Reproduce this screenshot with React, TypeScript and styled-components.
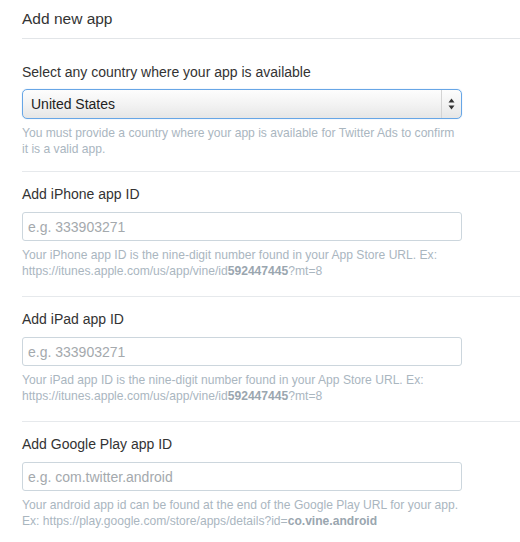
import styled, { createGlobalStyle } from 'styled-components';

const GlobalStyle = createGlobalStyle`
  body {
    margin: 0;
    background: #fff;
    font-family: "Helvetica Neue", "Liberation Sans", Arial, sans-serif;
    color: #333;
  }
`;

interface FieldSectionProps {
  label: string;
  placeholder: string;
  help: React.ReactNode;
}

const FieldSection = (props: FieldSectionProps) => {
  const { label, placeholder, help } = props;
  return (
    <Section>
      <Label>{label}</Label>
      <TextInput type="text" placeholder={placeholder} />
      <HelpText>{help}</HelpText>
    </Section>
  );
};

const App = () => {
  return (
    <>
      <GlobalStyle />
      <Page>
        <Header>
          <Title>Add new app</Title>
        </Header>
        <Section $first>
          <Label>Select any country where your app is available</Label>
          <SelectBox>
            <SelectValue>United States</SelectValue>
            <SelectHandle>
              <svg width="7" height="12" viewBox="0 0 7 12">
                <path d="M3.5 0.5 L6.5 4.5 L0.5 4.5 Z" fill="#333" />
                <path d="M3.5 11.5 L6.5 7.5 L0.5 7.5 Z" fill="#333" />
              </svg>
            </SelectHandle>
          </SelectBox>
          <HelpText>
            You must provide a country where your app is available for Twitter Ads to confirm
            <br />
            it is a valid app.
          </HelpText>
        </Section>
        <FieldSection
          label="Add iPhone app ID"
          placeholder="e.g. 333903271"
          help={
            <>
              Your iPhone app ID is the nine-digit number found in your App Store URL. Ex:
              <br />
              https://itunes.apple.com/us/app/vine/id<Strong>592447445</Strong>?mt=8
            </>
          }
        />
        <FieldSection
          label="Add iPad app ID"
          placeholder="e.g. 333903271"
          help={
            <>
              Your iPad app ID is the nine-digit number found in your App Store URL. Ex:
              <br />
              https://itunes.apple.com/us/app/vine/id<Strong>592447445</Strong>?mt=8
            </>
          }
        />
        <FieldSection
          label="Add Google Play app ID"
          placeholder="e.g. com.twitter.android"
          help={
            <>
              Your android app id can be found at the end of the Google Play URL for your app.
              <br />
              Ex: https://play.google.com/store/apps/details?id=<Strong>co.vine.android</Strong>
            </>
          }
        />
      </Page>
    </>
  );
};

export default App;

const Page = styled.div`
  display: flex;
  flex-direction: column;
  padding-left: 22px;
  width: 498px;
`;

const Header = styled.div`
  padding: 9px 0 9px;
  border-bottom: 1px solid #e2e5e8;
`;

const Title = styled.h1`
  margin: 0;
  font-size: 15.5px;
  line-height: 20px;
  font-weight: 400;
  color: #333;
`;

const Section = styled.section<{ $first?: boolean }>`
  display: flex;
  flex-direction: column;
  padding: ${({ $first }) => ($first ? '23px 0 14px' : '12px 0 17px')};
  border-top: ${({ $first }) => ($first ? 'none' : '1px solid #e6e9ec')};
`;

const Label = styled.label`
  font-size: 14px;
  line-height: 20px;
  color: #333;
  margin-bottom: 8px;
  white-space: nowrap;
`;

const TextInput = styled.input`
  box-sizing: border-box;
  width: 440px;
  height: 29px;
  margin: 0;
  padding: 0 5px;
  border: 1px solid #ccd6dd;
  border-radius: 3px;
  font-family: "Helvetica Neue", "Liberation Sans", Arial, sans-serif;
  font-size: 14px;
  color: #333;
  outline: none;

  &::placeholder {
    color: #a4a9ad;
  }
`;

const SelectBox = styled.div`
  box-sizing: border-box;
  display: flex;
  align-items: stretch;
  width: 440px;
  height: 30px;
  margin-top: -1px;
  border: 1px solid #67a6e6;
  border-radius: 5px;
  background: linear-gradient(to bottom, #fdfdfd 0%, #f3f3f3 50%, #e6e6e6 100%);
  box-shadow: 0 0 1px rgba(90, 160, 230, 0.6);
`;

const SelectValue = styled.span`
  flex: 1;
  display: flex;
  align-items: center;
  padding-left: 8px;
  font-size: 14px;
  color: #222;
`;

const SelectHandle = styled.span`
  display: flex;
  align-items: center;
  justify-content: center;
  width: 19px;
  border-left: 1px solid #d4d4d4;
`;

const HelpText = styled.p`
  margin: 6px 0 0;
  font-size: 12.1px;
  line-height: 16px;
  color: #aab6bf;
  white-space: nowrap;
`;

const Strong = styled.b`
  font-weight: 700;
  color: #9aa6af;
`;
